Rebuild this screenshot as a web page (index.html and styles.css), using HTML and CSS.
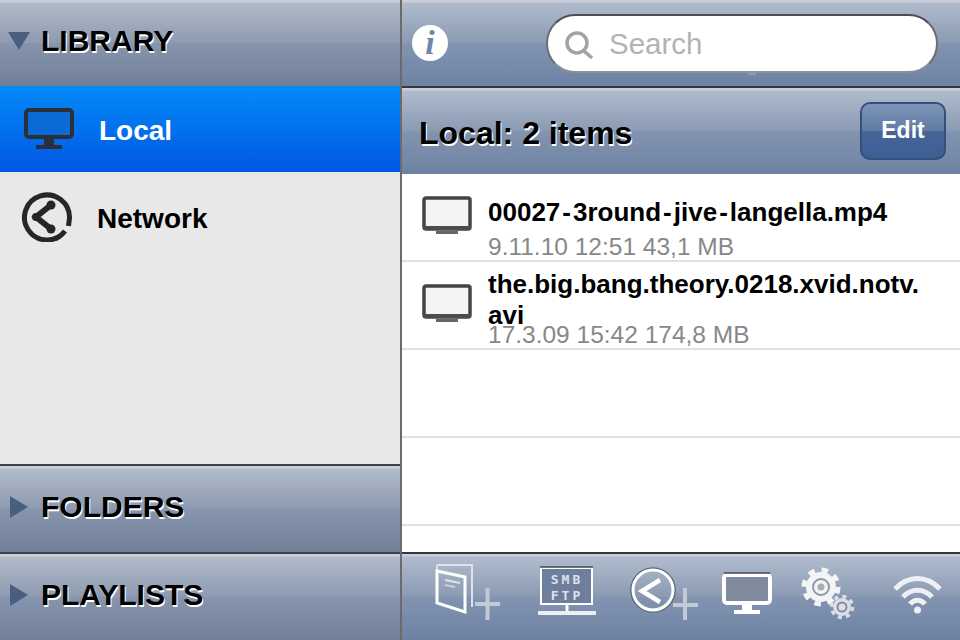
FILE: index.html
```html
<!DOCTYPE html>
<html lang="en">

<head>
    <meta charset="UTF-8">
    <meta name="viewport" content="width=device-width, initial-scale=1.0">
    <title>Library</title>
    <link rel="stylesheet" href="styles.css">
</head>

<body>
    <div class="app">
        <!-- Left column -->
        <div class="sidebar">
            <div class="section-head section-head-first">
                <span class="arrow-down"></span>
                <span class="section-title">LIBRARY</span>
            </div>
            <div class="side-row side-row-active">
                <svg class="side-icon" width="54" height="44" viewBox="0 0 54 44">
                    <rect x="4" y="3" width="46" height="27" rx="3" fill="#0a6ad8" stroke="#2b3038" stroke-width="4"/>
                    <path d="M22 32h10v7H22z" fill="#2b3038"/>
                    <path d="M14 38h26v4H14z" fill="#2b3038"/>
                </svg>
                <span class="side-label">Local</span>
            </div>
            <div class="side-row side-row-network">
                <svg class="side-icon" width="54" height="52" viewBox="0 0 54 52">
                    <path d="M45 41A22.5 22.5 0 1 1 49.500 28L48.500 36" fill="none" stroke="#262626" stroke-width="5"/>
                    <path d="M36 50L45 42" fill="none" stroke="#262626" stroke-width="3"/>
                    <path d="M31 15L16 27L31 39" fill="none" stroke="#262626" stroke-width="6"/>
                    <circle cx="31" cy="15" r="4.500" fill="#262626"/>
                    <circle cx="16" cy="27" r="4" fill="#262626"/>
                    <circle cx="31" cy="39" r="4.500" fill="#262626"/>
                </svg>
                <span class="side-label side-label-network">Network</span>
            </div>
            <div class="side-fill"></div>
            <div class="section-head section-head-line">
                <span class="arrow-right"></span>
                <span class="section-title">FOLDERS</span>
            </div>
            <div class="section-head section-head-line">
                <span class="arrow-right"></span>
                <span class="section-title">PLAYLISTS</span>
            </div>
        </div>

        <!-- Right column -->
        <div class="main">
            <div class="top-bar">
                <div class="info-button">i</div>
                <div class="search-box">
                    <svg class="search-icon" width="30" height="31" viewBox="0 0 30 31">
                        <circle cx="13" cy="15" r="10" fill="none" stroke="#a3a3a3" stroke-width="3.500"/>
                        <path d="M20 23l8 7" stroke="#a3a3a3" stroke-width="3.500"/>
                    </svg>
                    <span class="search-text">Search</span>
                </div>
            </div>
            <div class="list-head">
                <span class="list-title">Local: 2 items</span>
                <div class="edit-button">Edit</div>
            </div>
            <div class="file-list">
                <div class="file-row">
                    <svg class="file-icon" width="52" height="42" viewBox="0 0 52 42">
                        <rect x="2" y="2" width="46" height="31" rx="2" fill="#f4f4f4" stroke="#444" stroke-width="3.500"/>
                        <path d="M1 30h48v4H1z" fill="#4c4c4c"/>
                        <path d="M14 35h22v3H14z" fill="#666"/>
                    </svg>
                    <div class="file-text">
                        <div class="file-name"><div>00027<span class="dash">-</span>3round<span class="dash">-</span>jive<span class="dash">-</span>langella.mp4</div></div>
                        <div class="file-meta">9.11.10 12:51 43,1 MB</div>
                    </div>
                </div>
                <div class="file-row">
                    <svg class="file-icon" width="52" height="42" viewBox="0 0 52 42">
                        <rect x="2" y="2" width="46" height="31" rx="2" fill="#f4f4f4" stroke="#444" stroke-width="3.500"/>
                        <path d="M1 30h48v4H1z" fill="#4c4c4c"/>
                        <path d="M14 35h22v3H14z" fill="#666"/>
                    </svg>
                    <div class="file-text">
                        <div class="file-name"><div>the.big.bang.theory.0218.xvid.notv.<br>avi</div></div>
                        <div class="file-meta">17.3.09 15:42 174,8 MB</div>
                    </div>
                </div>
                <div class="file-row"></div>
                <div class="file-row"></div>
            </div>
            <div class="tool-bar">
                <!-- Add folder -->
                <svg width="102" height="66" viewBox="0 0 102 66">
                    <path d="M5 1H40V43" fill="none" stroke="#dde1e8" stroke-width="2"/>
                    <path d="M5 1V39" fill="none" stroke="#dde1e8" stroke-width="2"/>
                    <path d="M5 7L33 13V48L5 39Z" fill="none" stroke="#fff" stroke-width="3"/>
                    <path d="M13 16l15 3" stroke="#dde1e8" stroke-width="2"/>
                    <path d="M13 21l10 2" stroke="#c9cfda" stroke-width="2"/>
                    <path d="M43 40h25M55.500 24v32" stroke="#c3cad6" stroke-width="4"/>
                </svg>
                <!-- SMB / FTP -->
                <svg width="94" height="66" viewBox="0 0 94 66">
                    <rect x="7" y="4" width="51" height="36" fill="#6d7f9c" stroke="#fff" stroke-width="2"/>
                    <path d="M6 3h53" stroke="#3f4856" stroke-width="1.500"/>
                    <text class="smb-text" x="33" y="20">SMB</text>
                    <text class="smb-text" x="33" y="36">FTP</text>
                    <path d="M33 41v7" stroke="#fff" stroke-width="3"/>
                    <path d="M4 49h58" stroke="#eceef2" stroke-width="4"/>
                </svg>
                <!-- Add network -->
                <svg width="90" height="66" viewBox="0 0 90 66">
                    <circle cx="25" cy="26" r="22" fill="none" stroke="#59667c" stroke-width="1.500"/>
                    <circle cx="25" cy="26" r="20" fill="none" stroke="#fff" stroke-width="3"/>
                    <path d="M32 16L14 27L32 38" fill="none" stroke="#fff" stroke-width="4.500"/>
                    <path d="M45 41h25M57 24v32" stroke="#c3cad6" stroke-width="4"/>
                </svg>
                <!-- Local -->
                <svg width="80" height="66" viewBox="0 0 80 66">
                    <rect x="6" y="11" width="46" height="28" rx="3" fill="#808a9d" stroke="#fff" stroke-width="4"/>
                    <path d="M6 9h46" stroke="#3f4856" stroke-width="1.500"/>
                    <path d="M24 41h10v6H24z" fill="#fff"/>
                    <path d="M16 46h26v4H16z" fill="#fff"/>
                </svg>
                <!-- Settings -->
                <svg width="90" height="66" viewBox="0 0 90 66">
                    <circle cx="23" cy="23" r="15" fill="#f4f4f4"/>
                    <circle cx="23" cy="23" r="17" fill="none" stroke="#f4f4f4" stroke-width="5" stroke-dasharray="6.500 6.850"/>
                    <circle cx="23" cy="23" r="8" fill="none" stroke="#8c97a8" stroke-width="2"/>
                    <circle cx="23" cy="23" r="3.500" fill="#a4adba"/>
                    <circle cx="44" cy="43" r="9" fill="#dcdfe4"/>
                    <circle cx="44" cy="43" r="10.500" fill="none" stroke="#dcdfe4" stroke-width="3.500" stroke-dasharray="4 4.250"/>
                    <circle cx="44" cy="43" r="4.500" fill="none" stroke="#7f8ca2" stroke-width="2"/>
                </svg>
                <!-- Wifi -->
                <svg width="70" height="66" viewBox="0 0 70 66">
                    <path d="M7 25C20 11 39 11 52 25" fill="none" stroke="#eef0f3" stroke-width="5"/>
                    <path d="M15 33C23 24 36 24 44 33" fill="none" stroke="#eef0f3" stroke-width="5"/>
                    <path d="M22 40C26 35 33 35 37 40" fill="none" stroke="#eef0f3" stroke-width="5"/>
                    <circle cx="29.500" cy="46" r="3.500" fill="#eef0f3"/>
                </svg>
            </div>
        </div>
    </div>
</body>

</html>
```
FILE: styles.css
```css
body {
    margin: 0;
    padding: 0;
    font-family: "Liberation Sans", Arial, sans-serif;
    background-color: #fff;
}

.app {
    display: flex;
    width: 960px;
    height: 640px;
    overflow: hidden;
}

.sidebar {
    width: 400px;
    display: flex;
    flex-direction: column;
    border-right: 2px solid #6b6b6b;
    background-color: #e8e8e8;
}

.section-head {
    height: 88px;
    box-sizing: border-box;
    display: flex;
    align-items: center;
    padding: 0 0 4px 8px;
    background: linear-gradient(#c9ced8 0, #c9ced8 2px, #b0bbca 3px, #8e9ab0 50%, #8695ad 50%, #727f99 100%);
}

.section-head-first {
    height: 86px;
}

.section-head-line {
    border-top: 2px solid #3f4245;
}

.arrow-down {
    width: 0;
    height: 0;
    border-left: 11px solid transparent;
    border-right: 11px solid transparent;
    border-top: 18px solid #4a5f80;
    margin-right: 11px;
}

.arrow-right {
    width: 0;
    height: 0;
    border-top: 11px solid transparent;
    border-bottom: 11px solid transparent;
    border-left: 18px solid #4a5f80;
    margin: 0 13px 0 2px;
}

.section-title {
    font-size: 30px;
    font-weight: bold;
    color: #000;
    text-shadow: 1px 2px 0 #fff;
}

.side-row {
    height: 88px;
    display: flex;
    align-items: center;
    padding-left: 20px;
    color: #000;
}

.side-row-active {
    height: 86px;
    padding-left: 22px;
    color: #fff;
    background: linear-gradient(#048af8, #0157e2);
}

.side-icon {
    flex: none;
}

.side-label {
    font-size: 28px;
    font-weight: bold;
    margin: 4px 0 0 23px;
}

.side-label-network {
    margin: 6px 0 0 23px;
}

.side-fill {
    flex: 1;
}

.main {
    flex: 1;
    display: flex;
    flex-direction: column;
    min-width: 0;
}

.top-bar {
    height: 88px;
    box-sizing: border-box;
    display: flex;
    align-items: center;
    padding-left: 10px;
    border-bottom: 2px solid #33363a;
    background: linear-gradient(#c9ced8 0, #c9ced8 2px, #b0bccd 3px, #8a9ab3 50%, #8294b0 50%, #6d82a3 100%);
}

.info-button {
    width: 36px;
    height: 36px;
    border-radius: 50%;
    background-color: #fff;
    color: #6e86a8;
    font-family: "Liberation Serif", serif;
    font-style: italic;
    font-weight: bold;
    font-size: 34px;
    line-height: 36px;
    text-align: center;
}

.search-box {
    position: relative;
    width: 392px;
    height: 59px;
    box-sizing: border-box;
    margin-left: 98px;
    display: flex;
    align-items: center;
    padding-left: 16px;
    background-color: #fff;
    border: 2px solid #6a6d73;
    border-top-color: #4d4f54;
    border-bottom-color: #8b8f97;
    border-radius: 29px;
}

/* small tick under the field */
.search-box::after {
    content: "";
    position: absolute;
    left: 200px;
    bottom: -4px;
    width: 8px;
    height: 3px;
    background-color: #8f9aac;
}

.search-text {
    font-size: 29.500px;
    color: #b3b3b3;
    margin: 2px 0 0 15px;
}

.list-head {
    height: 86px;
    display: flex;
    align-items: center;
    justify-content: space-between;
    padding: 0 14px 0 17px;
    background: linear-gradient(#c9ced8 0, #c9ced8 2px, #b0bccd 3px, #8a9ab3 50%, #8294b0 50%, #6d82a3 100%);
}

.list-title {
    font-size: 32px;
    font-weight: bold;
    color: #000;
    text-shadow: 1px 2px 0 #fff;
    margin-top: 4px;
}

.edit-button {
    width: 86px;
    height: 58px;
    box-sizing: border-box;
    border: 2px solid #34507a;
    border-radius: 10px;
    background: linear-gradient(#7f95b7, #5f7ba3 50%, #46669a 50%, #3d5e92);
    color: #fff;
    font-size: 23px;
    font-weight: bold;
    line-height: 52px;
    text-align: center;
}

.file-list {
    flex: 1;
}

.file-row {
    height: 88px;
    box-sizing: border-box;
    display: flex;
    align-items: flex-start;
    padding: 13px 0 0 20px;
    border-bottom: 2px solid #e0e0e0;
}

.file-icon {
    flex: none;
    margin-top: 9px;
}

.file-text {
    margin-left: 14px;
    min-width: 0;
}

.file-name {
    height: 50px;
    display: flex;
    flex-direction: column;
    justify-content: center;
    font-size: 26px;
    font-weight: bold;
    line-height: 31px;
    color: #000;
}

.dash {
    margin: 0 2px;
}

.file-meta {
    font-size: 24.500px;
    line-height: 20px;
    color: #888;
}

.tool-bar {
    height: 88px;
    box-sizing: border-box;
    display: flex;
    align-items: center;
    padding-left: 30px;
    border-top: 2px solid #33363a;
    background: linear-gradient(#c9ced8 0, #c9ced8 2px, #b0bccd 3px, #8a9ab3 50%, #8294b0 50%, #6d82a3 100%);
}

.tool-bar svg {
    flex: none;
}

.smb-text {
    font-family: "DejaVu Sans Mono", monospace;
    font-size: 13px;
    font-weight: bold;
    letter-spacing: 3px;
    fill: #dde1e8;
    text-anchor: middle;
}
```
